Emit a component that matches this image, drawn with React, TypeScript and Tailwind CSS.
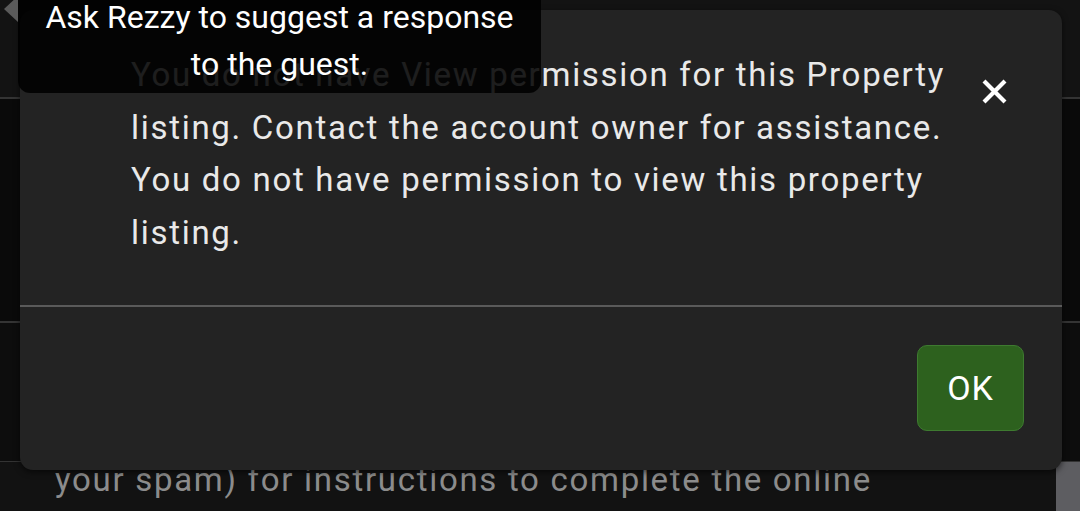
import React from "react";

export default function App() {
  return (
    <div
      className="relative w-[1080px] h-[511px] overflow-hidden bg-[#121212]"
      style={{ fontFamily: "Roboto, 'Noto Sans', Arial, sans-serif" }}
    >
      {/* background page */}
      <div className="flex flex-col h-full">
        <div className="h-[99px] bg-[#131313] border-b-2 border-[#343434]" />
        <div className="h-[224px] bg-[#0a0a0a] border-b-2 border-[#343434]" />
        <div className="h-[139px] bg-[#0d0d0d] border-b border-[#333333]" />
        <div className="flex-1 flex bg-[#121212]">
          <p className="pl-[55px] text-[33px] tracking-[1.7px] leading-[36px] text-[#8c8c8c] whitespace-nowrap">
            your spam) for instructions to complete the online
          </p>
          <div className="ml-auto w-[24px] bg-[#5d5d61]" />
        </div>
      </div>

      {/* dialog */}
      <div className="absolute left-[20px] top-[10px] w-[1042px] h-[460px] bg-[#232323] rounded-[13px] shadow-[0_2px_6px_rgba(0,0,0,0.6)] flex flex-col">
        <div className="h-[295px] flex">
          <div className="pl-[111px] pt-[39px] text-[33px] tracking-[1.7px] leading-[52.5px] text-[#e9e9e9]">
            <span className="block whitespace-nowrap">You do not have View permission for this Property</span>
            <span className="block whitespace-nowrap">listing. Contact the account owner for assistance.</span>
            <span className="block whitespace-nowrap">You do not have permission to view this property</span>
            <span className="block whitespace-nowrap">listing.</span>
          </div>
          <div className="ml-auto mr-[55px] mt-[69px] shrink-0">
            <svg width="25" height="25" viewBox="0 0 25 25">
              <path d="M2 2 L23 23 M23 2 L2 23" stroke="#ffffff" strokeWidth="4.2" strokeLinecap="butt" />
            </svg>
          </div>
        </div>
        <div className="h-[2px] bg-[#5a5a5a]" />
        <div className="flex-1 flex justify-end pt-[38px] pr-[38px]">
          <button className="w-[107px] h-[86px] rounded-[10px] bg-[#2d611e] border border-[#3e7a30] text-white text-[34px] tracking-[1px] leading-none flex items-center justify-center">
            OK
          </button>
        </div>
      </div>

      {/* scroll arrow */}
      <svg className="absolute left-0 top-0" width="20" height="24" viewBox="0 0 20 24">
        <polygon points="18,-4 18,22 4,9" fill="#5a5a5a" />
      </svg>

      {/* tooltip */}
      <div className="absolute left-[18px] top-[-12px] w-[523px] h-[105px] rounded-[12px] bg-black/[0.87] pt-[6px] text-center text-white text-[32px] leading-[47px]">
        <span className="block">Ask Rezzy to suggest a response</span>
        <span className="block">to the guest.</span>
      </div>
    </div>
  );
}
